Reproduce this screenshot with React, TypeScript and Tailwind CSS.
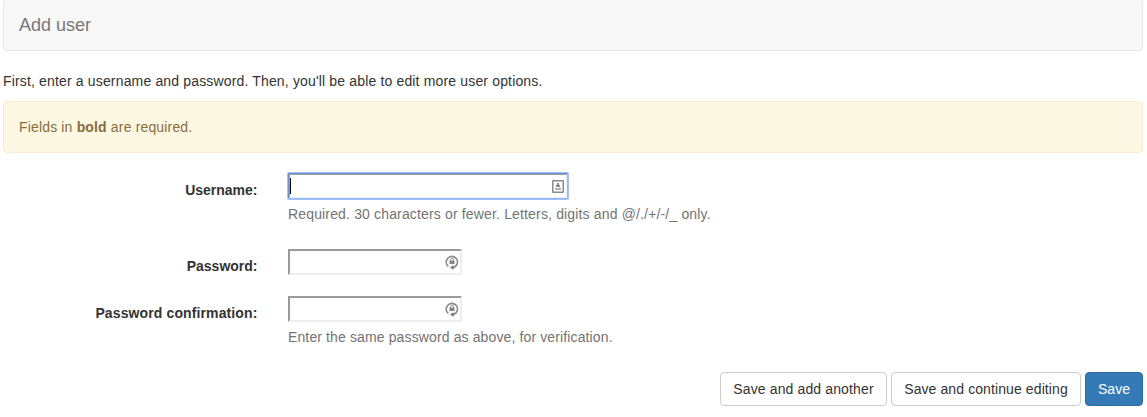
import type { ReactNode } from "react";

function ContactIcon() {
  return (
    <svg width="12" height="13" viewBox="0 0 12 13" fill="none">
      <rect x="0.75" y="0.75" width="10.5" height="11.5" rx="0.5" stroke="#8a8a8a" strokeWidth="1.5" />
      <path d="M5 3h2v2H5zM4 5h4v2H4z" fill="#8a8a8a" />
      <path d="M3 8h6v2H3z" fill="#b0b0b0" />
    </svg>
  );
}

function LockIcon() {
  return (
    <svg width="14" height="15" viewBox="0 0 14 15" fill="none">
      <path d="M3.2 11.3A5.6 5.6 0 1 1 12.1 9.1Q10.8 12.2 7.4 12.6" stroke="#8c8c8c" strokeWidth="1.7" />
      <path d="M8.6 10.2v4.6L5 12.6z" fill="#777" />
      <path d="M5.5 6V4.8a1.5 1.5 0 0 1 3 0V6" stroke="#999" strokeWidth="1" />
      <path d="M4.5 5.5h5V9h-5z" fill="#858585" />
    </svg>
  );
}

function Row({ label, className, children }: { label: ReactNode; className: string; children: ReactNode }) {
  return (
    <div className={`flex ${className}`}>
      <label className="w-[254.5px] shrink-0 pt-[7px] text-right font-bold">{label}</label>
      <div className="ml-[30.5px]">{children}</div>
    </div>
  );
}

function PasswordField() {
  return (
    <div className="flex h-[26px] w-[174px] items-center justify-end border-2 border-t-[#9a9a9a] border-r-[#eee] border-b-[#eee] border-l-[#9a9a9a] bg-white pr-px">
      <LockIcon />
    </div>
  );
}

export default function App() {
  return (
    <main className="h-[417px] overflow-hidden bg-white pr-1 pl-[3px] font-['Liberation_Sans',Arial,sans-serif] text-[14px] leading-5 text-[#333]">
      <header className="-mt-px h-[52px] rounded border border-[#e7e7e7] bg-[#f8f8f8] px-[15px] pt-[15px] text-[18px] text-[#777]">
        Add user
      </header>
      <p className="mt-5 tracking-[0.157px]">First, enter a username and password. Then, you'll be able to edit more user options.</p>
      <div className="mt-[10px] h-[52px] rounded border border-[#faebcc] bg-[#fcf8e3] p-[15px] tracking-[0.16px] text-[#8a6d3b]">
        Fields in <b>bold</b> are required.
      </div>
      <form>
        <Row label="Username:" className="mt-5 h-[76px]">
          <div className="flex h-[26px] w-[280px] items-center rounded-[1px] border-2 border-t-[#9a9a9a] border-r-[#eee] border-b-[#eee] border-l-[#9a9a9a] pr-[2px] outline-2 -outline-offset-1 outline-[#4d90fe]/55">
            <span className="h-4 w-px bg-black" />
            <span className="ml-auto"><ContactIcon /></span>
          </div>
          <p className="mt-[5px] tracking-[0.155px] text-[#737373]">Required. 30 characters or fewer. Letters, digits and @/./+/-/_ only.</p>
        </Row>
        <Row label="Password:" className="h-[47px]"><PasswordField /></Row>
        <Row label={<span className="tracking-[0.12px]">Password confirmation:</span>} className="h-[76px]">
          <PasswordField />
          <p className="mt-[5px] tracking-[0.125px] text-[#737373]">Enter the same password as above, for verification.</p>
        </Row>
        <div className="flex justify-end gap-1">
          <button type="button" className="h-[34px] w-[167px] rounded border border-[#ccc] tracking-[0.13px] whitespace-nowrap">Save and add another</button>
          <button type="button" className="h-[34px] w-[190px] rounded border border-[#ccc] tracking-[0.1px] whitespace-nowrap">Save and continue editing</button>
          <button type="button" className="h-[34px] w-[58px] rounded border border-[#2e6da4] bg-[#337ab7] text-white">Save</button>
        </div>
      </form>
    </main>
  );
}
